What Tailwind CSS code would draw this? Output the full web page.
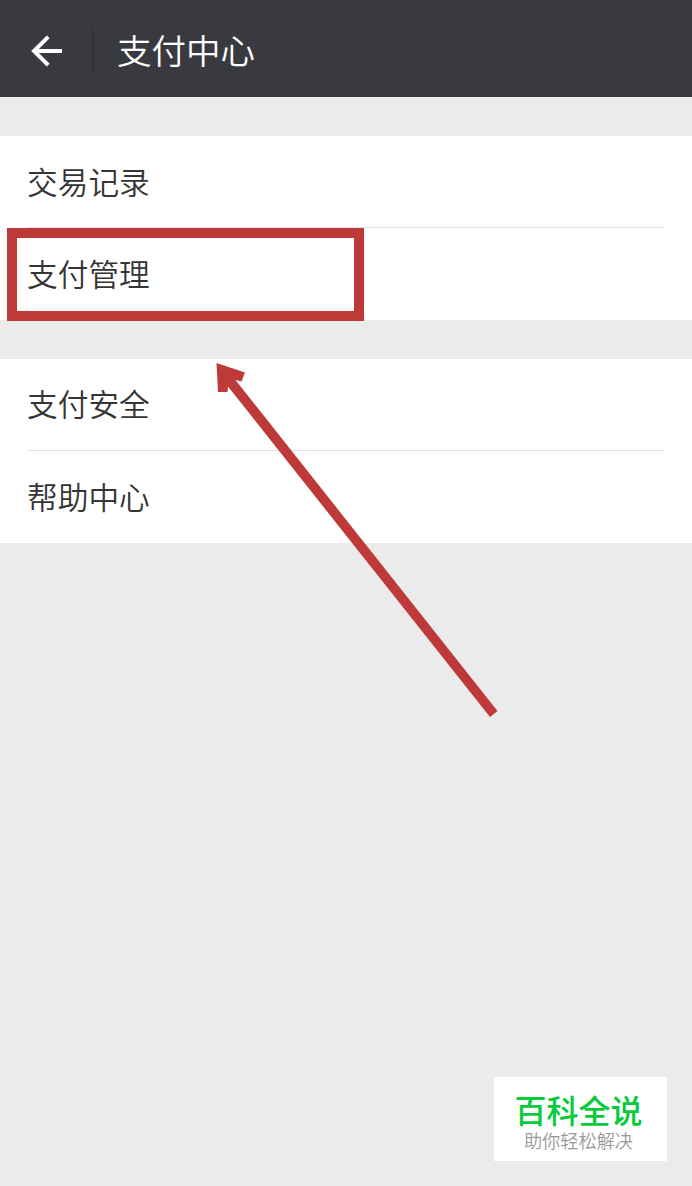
<!DOCTYPE html>
<html lang="zh-CN">
<head>
    <meta charset="UTF-8">
    <meta name="viewport" content="width=device-width, initial-scale=1.0">
    <title>支付中心</title>
    <script src="https://cdn.jsdelivr.net/npm/@tailwindcss/browser@4"></script>
</head>
<body class="relative flex flex-col h-[1186px] overflow-hidden bg-[#ebebeb] font-['Noto_Sans_CJK_SC',sans-serif] text-[#353535]">
<header class="flex items-center h-[97px] pt-[5px] bg-[#393a3f] text-white shrink-0">
    <button class="ml-[30px] w-8 h-8 flex items-center" aria-label="返回">
        <svg class="w-8 h-8" viewBox="0 0 32 32" fill="none" stroke="currentColor" stroke-width="4">
            <path d="M32 16H4M18.2 1.8L4 16l14.2 14.2"/>
        </svg>
    </button>
    <div class="ml-[30px] w-[2px] h-12 bg-[#323338]"></div>
    <h1 class="ml-[23px] pb-[4px] text-[34.5px] leading-[48px] font-[350]">支付中心</h1>
</header>

<main class="pt-[39px] space-y-[39px] text-[30.7px] font-[350]">
    <section class="h-[184px] px-[27px] bg-white">
        <a class="flex items-center h-[92px] pb-[1px] border-b border-[#e0e0e0]" href="#">交易记录</a>
        <!-- Highlighted item -->
        <a class="relative flex items-center h-[92px] pb-[2px]" href="#">
            支付管理
            <span class="absolute -left-5 top-0 w-[357px] h-[93px] border-[10px] border-[#be3a39]"></span>
        </a>
    </section>
    <section class="h-[184px] px-[27px] bg-white">
        <a class="flex items-center h-[92px] pb-[2px] border-b border-[#e0e0e0]" href="#">支付安全</a>
        <a class="flex items-center h-[92px] pb-[2px]" href="#">帮助中心</a>
    </section>
</main>

<!-- Pointer arrow -->
<svg class="absolute left-[210px] top-[356px]" width="300" height="370" viewBox="210 356 300 370" fill="#be3a39">
    <path d="M216.5 363L245 372.500L241.500 381.500L235.500 380L497.500 711L490 717L228 386.500L227.500 392H218z"/>
</svg>

<!-- Watermark -->
<div class="absolute left-[494px] top-[1077px] w-[173px] h-[84px] bg-white text-center">
    <p class="mt-[14px] -ml-1 text-[32px] leading-[36px] font-medium text-[#07cb3c]">百科全说</p>
    <p class="-ml-1 text-[18.2px] leading-[27px] font-[350] text-[#999]">助你轻松解决</p>
</div>
</body>
</html>
